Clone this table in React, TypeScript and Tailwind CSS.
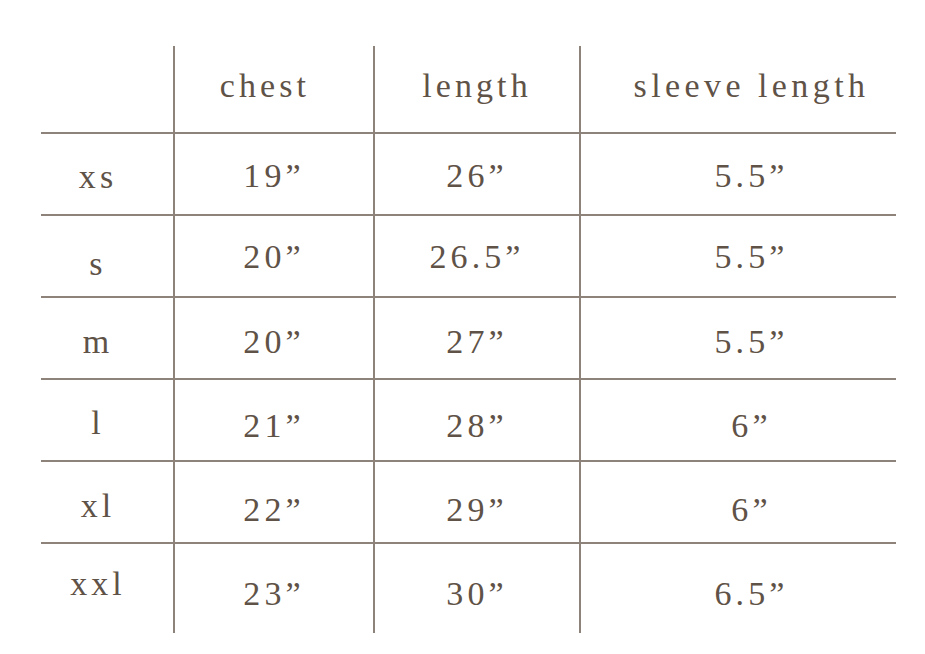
const rows = [
  { size: "xs", chest: "19”", length: "26”", sleeve: "5.5”", h: "h-[82px]", labelPad: "pt-[25.5px]", valuePad: "pt-[24.5px]" },
  { size: "s", chest: "20”", length: "26.5”", sleeve: "5.5”", h: "h-[82px]", labelPad: "pt-[30.5px]", valuePad: "pt-[23.5px]" },
  { size: "m", chest: "20”", length: "27”", sleeve: "5.5”", h: "h-[82px]", labelPad: "pt-[26.5px]", valuePad: "pt-[26.5px]" },
  { size: "l", chest: "21”", length: "28”", sleeve: "6”", h: "h-[82px]", labelPad: "pt-[25.5px]", valuePad: "pt-[28.5px]" },
  { size: "xl", chest: "22”", length: "29”", sleeve: "6”", h: "h-[82px]", labelPad: "pt-[26.5px]", valuePad: "pt-[30.5px]" },
  { size: "xxl", chest: "23”", length: "30”", sleeve: "6.5”", h: "h-[91px]", labelPad: "pt-[22.5px]", valuePad: "pt-[32.5px]" },
];

const line = "border-[#8d837b]";

export default function App() {
  return (
    <div className="w-[925px] h-[654px] bg-white pt-[46px] pl-[41px] font-[Liberation_Serif,Times_New_Roman,serif] text-[34px] leading-none tracking-[0.12em] text-[#5f5247]">
      <div className="grid grid-cols-[132px_200px_206px_317px]">
        {/* header */}
        <div className="h-[86px]" />
        <div className={`h-[86px] border-l-2 ${line} pt-[22.5px] pr-[18px] text-center`}>chest</div>
        <div className={`h-[86px] border-l-2 ${line} pt-[22.5px] text-center`}>length</div>
        <div className={`h-[86px] border-l-2 ${line} pt-[22.5px] pl-[26px] text-center tracking-[0.13em]`}>sleeve length</div>

        {rows.map((r) => (
          <div key={r.size} className="contents">
            <div className={`${r.h} border-t-2 ${line} ${r.labelPad} pr-[18px] text-center`}>{r.size}</div>
            <div className={`${r.h} border-t-2 border-l-2 ${line} ${r.valuePad} text-center`}>{r.chest}</div>
            <div className={`${r.h} border-t-2 border-l-2 ${line} ${r.valuePad} text-center`}>{r.length}</div>
            <div className={`${r.h} border-t-2 border-l-2 ${line} ${r.valuePad} pl-[26px] text-center`}>{r.sleeve}</div>
          </div>
        ))}
      </div>
    </div>
  );
}
